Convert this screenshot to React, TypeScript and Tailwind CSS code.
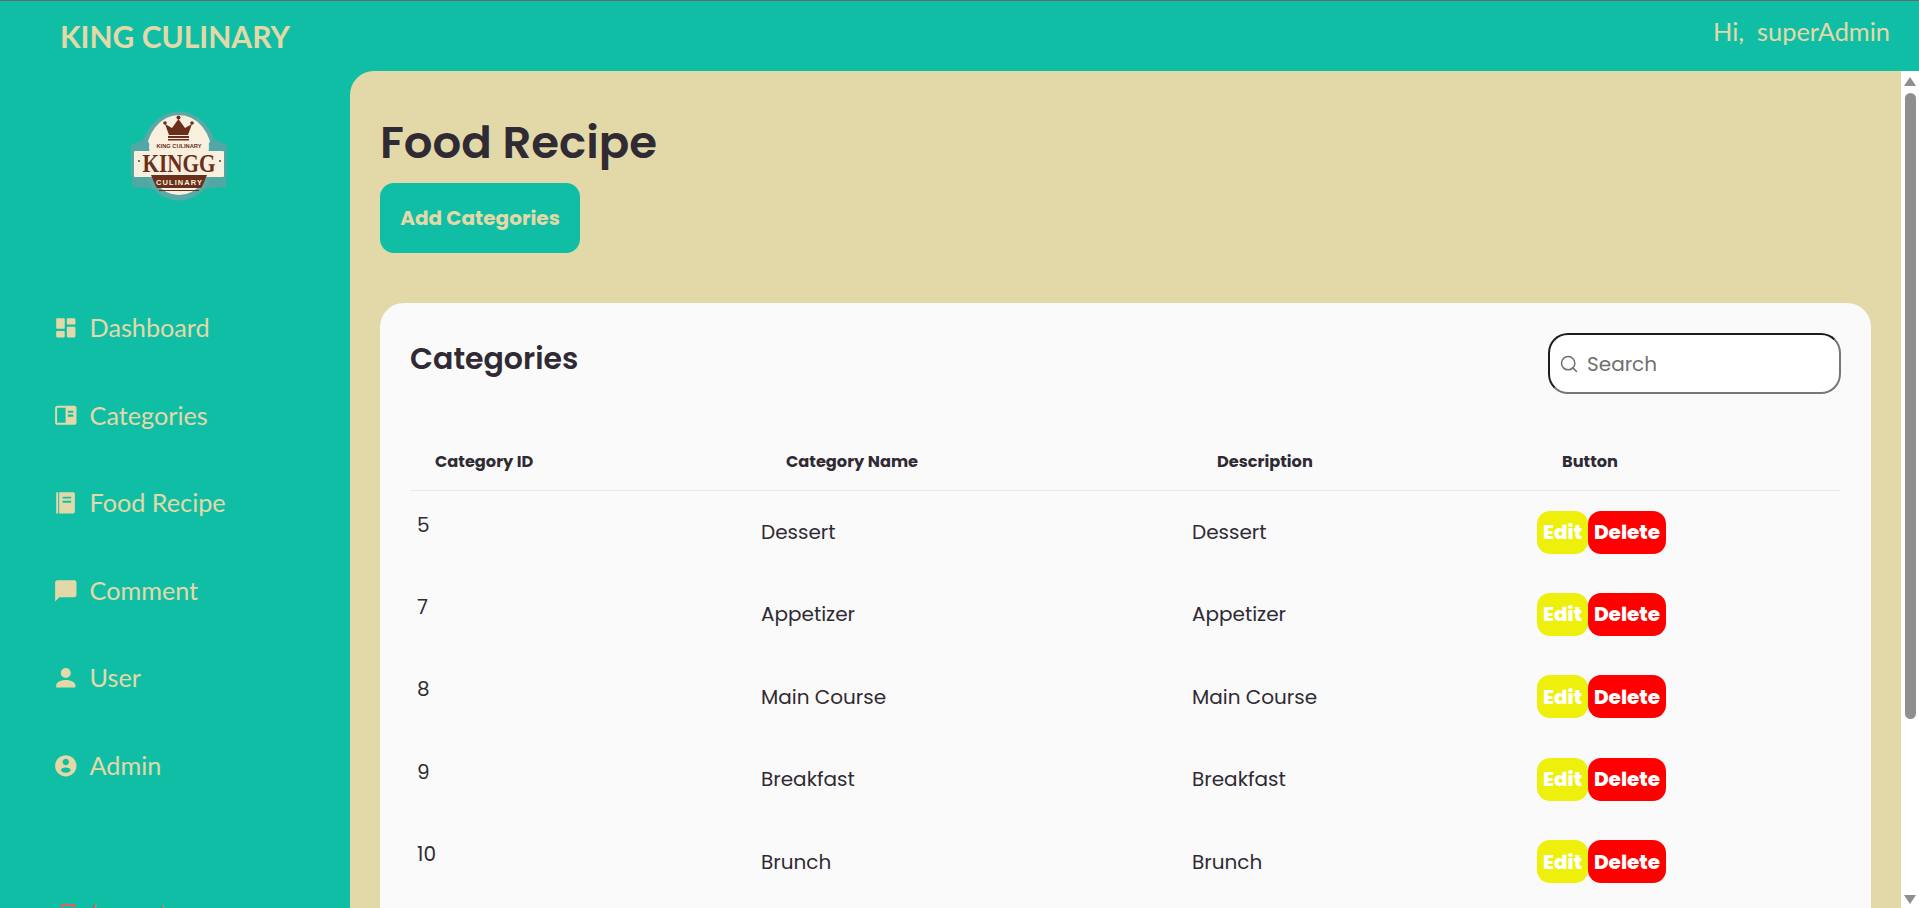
import React from 'react';
import { Search } from 'lucide-react';

const navItems = [
  { label: 'Dashboard', d: 'M4 13h6c.55 0 1-.45 1-1V4c0-.55-.45-1-1-1H4c-.55 0-1 .45-1 1v8c0 .55.45 1 1 1zm0 8h6c.55 0 1-.45 1-1v-4c0-.55-.45-1-1-1H4c-.55 0-1 .45-1 1v4c0 .55.45 1 1 1zm10 0h6c.55 0 1-.45 1-1v-8c0-.55-.45-1-1-1h-6c-.55 0-1 .45-1 1v8c0 .55.45 1 1 1zM13 4v4c0 .55.45 1 1 1h6c.55 0 1-.45 1-1V4c0-.55-.45-1-1-1h-6c-.55 0-1 .45-1 1z' },
  { label: 'Categories', d: 'M4 2.5h16c1.1 0 2 .9 2 2v14c0 1.1-.9 2-2 2H4c-1.1 0-2-.9-2-2v-14c0-1.1.9-2 2-2zM3.8 4.500v14h8v-14h-8zM14 7.200v1.900h5V7.200h-5zM14 10.900v1.900h5v-1.900h-5z' },
  { label: 'Food Recipe', d: 'M3 2h1.900v20H3V2zM5.800 2H19c.8 0 1.500.7 1.500 1.500v17c0 .8-.7 1.500-1.500 1.500H5.800V2zM9 6.400V8h8V6.400H9zM9 10.100V12h8v-1.900H9z' },
  { label: 'Comment', d: 'M20 2H4c-1.100 0-2 .9-2 2v18l4-4h14c1.100 0 2-.9 2-2V4c0-1.100-.9-2-2-2z' },
  { label: 'User', d: 'M12 12.200a4.700 4.700 0 1 0 0-9.400 4.700 4.700 0 0 0 0 9.400zM12 14c-3.500 0-9 1.700-9 5v2h18v-2c0-3.300-5.500-5-9-5z' },
  { label: 'Admin', d: 'M12 2C6.480 2 2 6.480 2 12s4.480 10 10 10 10-4.480 10-10S17.520 2 12 2zm0 3.500c1.660 0 3 1.340 3 3s-1.340 3-3 3-3-1.340-3-3 1.340-3 3-3zm0 8c2.500 0 4.500 1.100 4.500 2.500s-2 2.500-4.500 2.500-4.500-1.100-4.500-2.500 2-2.500 4.500-2.500z' },
];

const rows = [
  { id: 5, name: 'Dessert' },
  { id: 7, name: 'Appetizer' },
  { id: 8, name: 'Main Course' },
  { id: 9, name: 'Breakfast' },
  { id: 10, name: 'Brunch' },
];

const Logo = () => (
  <svg width="98" height="90" viewBox="0 0 98 90" overflow="visible">
    {/* ribbons */}
    <path d="M2 62 L2 76 Q14 76 26 79 L30 66 Z" fill="#4fa8a4" />
    <path d="M96 62 L96 76 Q84 76 72 79 L68 66 Z" fill="#4fa8a4" />
    {/* badge */}
    <ellipse cx="49" cy="45" rx="38" ry="44.500" fill="#5aa9a6" />
    <ellipse cx="49" cy="44" rx="33" ry="40" fill="#f8efdf" />
    <path d="M1 34 L16 27 L20 34 H78 L82 27 L97 34 V65 H1 Z" fill="#4fa8a4" />
    <ellipse cx="49" cy="36" rx="30" ry="30" fill="#f8efdf" />
    <rect x="4" y="40" width="90" height="26" rx="1" fill="#f8efdf" />
    {/* crown */}
    <path d="M39 24 L35 13 L42 17 L48.500 8 L55 17 L62 13 L58 24 Z" fill="#6a2f1b" />
    <circle cx="35" cy="12" r="1.800" fill="#6a2f1b" />
    <circle cx="48.500" cy="6.500" r="2" fill="#6a2f1b" />
    <circle cx="62" cy="12" r="1.800" fill="#6a2f1b" />
    <rect x="38" y="25" width="21" height="2" fill="#6a2f1b" />
    <rect x="38" y="28" width="21" height="1.500" fill="#6a2f1b" />
    <text x="49" y="36.500" textAnchor="middle" fontSize="5.500" fontFamily="Liberation Sans" fontWeight="700" fill="#6a2f1b" textLength="45" lengthAdjust="spacingAndGlyphs">KING CULINARY</text>
    <text x="49" y="61" textAnchor="middle" fontSize="26" fontFamily="Liberation Serif" fontWeight="700" fill="#6a2f1b" textLength="73" lengthAdjust="spacingAndGlyphs">KINGG</text>
    <circle cx="9" cy="50" r="1" fill="#6a2f1b" />
    <circle cx="90" cy="50" r="1" fill="#6a2f1b" />
    {/* lower band */}
    <path d="M21 64 H77 C75 69 73 74 71 77 H27 C25 74 23 69 21 64 Z" fill="#6a2f1b" />
    <text x="49" y="74" textAnchor="middle" fontSize="7.500" fontFamily="Liberation Sans" fontWeight="700" fill="#f8efdf" textLength="46" lengthAdjust="spacing">CULINARY</text>
    <rect x="29" y="79" width="40" height="1" fill="#6a2f1b" />
  </svg>
);

export default function App() {
  return (
    <div className="h-[908px] w-[1919px] overflow-hidden flex flex-col bg-[#10bea6]">
      {/* Header */}
      <div className="h-[71px] shrink-0 border-t border-[#5f6b6b] flex items-center justify-between pl-[60px] pr-[29px] font-['Lato',sans-serif] text-[#e3d9a8]">
        <span className="text-[30px] font-bold leading-none -mt-[1px]">KING CULINARY</span>
        <span className="text-[25.4px] leading-none -mt-[9px] whitespace-pre">Hi,  superAdmin</span>
      </div>

      <div className="flex flex-1 min-h-0">
        {/* Sidebar */}
        <div className="w-[350px] shrink-0 flex flex-col font-['Lato',sans-serif] text-[#e3d9a8]">
          <div className="flex justify-center shrink-0 pl-[8px] pt-[40px] h-[242px]">
            <Logo />
          </div>
          <div className="flex flex-col shrink-0 gap-[57.5px] pl-[53px]">
            {navItems.map((item) => (
              <div key={item.label} className="flex items-center gap-[11px] h-[30px]">
                <svg width="25.6" height="25.6" viewBox="0 0 24 24" fill="currentColor">
                  <path fillRule="evenodd" d={item.d} />
                </svg>
                <span className="text-[25.2px] leading-none">{item.label}</span>
              </div>
            ))}
          </div>
          <div className="flex items-center shrink-0 gap-[9px] h-[30px] pl-[58px] mt-[118px] text-[#e35d5d]">
            <svg width="24" height="24" viewBox="0 0 24 24" fill="none" stroke="currentColor" strokeWidth="2">
              <rect x="4" y="3" width="12" height="18" />
            </svg>
            <span className="text-[25.2px] leading-none">Logout</span>
          </div>
        </div>

        {/* Main panel */}
        <div className="w-[1551px] shrink-0 bg-[#e3d9a8] rounded-tl-[24px] px-[30px] text-[#2f2a33] overflow-hidden font-['Poppins','Inter',sans-serif]">
          <h1 className="text-[45px] font-semibold leading-[63px] mt-[40px]">Food Recipe</h1>
          <button className="mt-[9px] h-[70px] w-[200px] rounded-[14px] bg-[#10bea6] text-[#e3d9a8] text-[20px] font-bold">
            Add Categories
          </button>

          {/* Card */}
          <div className="mt-[50px] bg-[#fafafa] rounded-t-[24px] h-[700px] px-[30px] pt-[30px]">
            <div className="flex justify-between items-start">
              <h2 className="text-[30px] font-semibold leading-[45px] mt-[3px]">Categories</h2>
              <div className="w-[293px] h-[61px] rounded-[20px] border-2 border-t-[#1c1c1c] border-l-[#1c1c1c] border-r-[#777] border-b-[#777] bg-white flex items-center pl-[9px] gap-[8px] text-[#6f6f6f]">
                <Search size={20} strokeWidth={1.8} />
                <span className="text-[20px]">Search</span>
              </div>
            </div>

            <table className="w-full mt-[43px] border-collapse table-fixed">
              <thead>
                <tr className="border-b border-[#e9e9e9] h-[53px]">
                  <th className="w-[351px] text-left pl-[25px] pb-[2px] text-[16.2px] font-bold">Category ID</th>
                  <th className="w-[431px] text-left pl-[25px] pb-[2px] text-[16.2px] font-bold">Category Name</th>
                  <th className="w-[345px] text-left pl-[25px] pb-[2px] text-[16.2px] font-bold">Description</th>
                  <th className="text-left pl-[25px] pb-[2px] text-[16.2px] font-bold">Button</th>
                </tr>
              </thead>
              <tbody>
                {rows.map((r) => (
                  <tr key={r.id} className="h-[82.5px] text-[20px]">
                    <td className="pl-[7px] align-top pt-[19px]">{r.id}</td>
                    <td className="pt-[1px]">{r.name}</td>
                    <td className="pt-[1px]">{r.name}</td>
                    <td className="pt-[1px]">
                      <div className="flex text-white text-[20px] font-extrabold">
                        <button className="h-[43px] w-[51px] rounded-[13px] bg-[#eef00c]">Edit</button>
                        <button className="h-[43px] w-[78px] rounded-[13px] bg-[#ff0000]">Delete</button>
                      </div>
                    </td>
                  </tr>
                ))}
              </tbody>
            </table>
          </div>
        </div>

        {/* Scrollbar */}
        <div className="w-[18px] shrink-0 bg-white flex flex-col items-center">
          <div className="mt-[6px] w-0 h-0 border-x-[6px] border-x-transparent border-b-[9px] border-b-[#8f8f8f]" />
          <div className="mt-[7px] w-[11px] h-[626px] rounded-full bg-[#8f8f8f]" />
          <div className="mt-auto mb-[4px] w-0 h-0 border-x-[6px] border-x-transparent border-t-[9px] border-t-[#8f8f8f]" />
        </div>
      </div>
    </div>
  );
}
